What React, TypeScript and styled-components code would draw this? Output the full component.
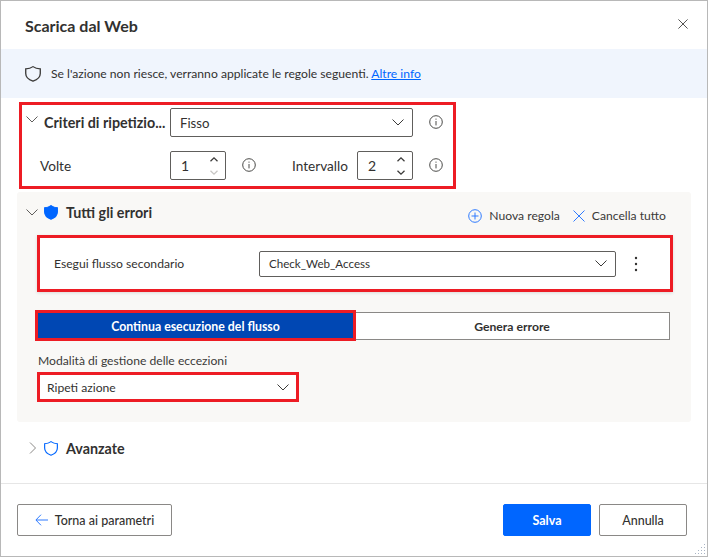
import React from "react";
import styled, { createGlobalStyle } from "styled-components";

const RED = "#ed1c24";
const BLUE = "#0066ff";
const TEXT = "#323130";
const FIELD_BORDER = "#605e5c";

const GlobalStyle = createGlobalStyle`
  html, body {
    margin: 0;
    padding: 0;
    background: #fff;
  }
  * {
    box-sizing: border-box;
  }
`;

const Window = styled.div`
  position: relative;
  width: 708px;
  height: 557px;
  display: flex;
  flex-direction: column;
  background: #fff;
  border: 1px solid #b8b8b8;
  font-family: "Lato", "Noto Sans", sans-serif;
  font-size: 12.15px;
  color: ${TEXT};
`;

const Header = styled.header`
  height: 48px;
  flex: none;
  display: flex;
  align-items: center;
  justify-content: space-between;
  padding: 0 19px 0 24px;
`;

const Title = styled.h1`
  margin: 0;
  font-size: 16px;
  font-weight: 700;
  color: ${TEXT};
`;

const CloseButton = styled.span`
  display: flex;
  color: #323130;
  margin-bottom: 2px;
`;

const Banner = styled.div`
  height: 49px;
  flex: none;
  display: flex;
  align-items: center;
  gap: 10px;
  padding-left: 24px;
  background: #f0f5fd;
`;

const BannerLink = styled.a`
  color: #0066ff;
  text-decoration: underline;
`;

const RetryBox = styled.section`
  width: 437px;
  height: 87px;
  margin: 4px 0 0 18px;
  padding: 3px 0 0;
  border: 3px solid ${RED};
  display: flex;
  flex-direction: column;
  gap: 14px;
`;

const Row = styled.div<{ $indent?: number }>`
  display: flex;
  align-items: center;
  height: 29px;
  font-size: 13.6px;
  padding-left: ${({ $indent }) => $indent ?? 0}px;
`;

const RetryLabel = styled.div`
  width: 148px;
  flex: none;
  display: flex;
  align-items: center;
  padding-left: 4px;
  gap: 6px;
  font-size: 14.3px;
  font-weight: 700;
  white-space: nowrap;
`;

const RetryChevron = styled.span`
  display: flex;
  margin-top: -6px;
`;

const PlainLabel = styled.div<{ $width: number; $left?: number }>`
  width: ${({ $width }) => $width}px;
  margin-left: ${({ $left }) => $left ?? 0}px;
  flex: none;
  white-space: nowrap;
`;

const Select = styled.div<{ $width: number; $height: number; $flat?: boolean; $size?: number }>`
  width: ${({ $width }) => $width}px;
  height: ${({ $height }) => $height}px;
  flex: none;
  display: flex;
  align-items: center;
  justify-content: space-between;
  padding: 0 8px 0 ${({ $flat }) => ($flat ? 7 : 9)}px;
  padding-right: ${({ $flat }) => ($flat ? 7 : 8)}px;
  background: #fff;
  border: ${({ $flat }) => ($flat ? "none" : `1px solid ${FIELD_BORDER}`)};
  border-radius: 2px;
  font-size: ${({ $size }) => $size ?? 12.15}px;
  white-space: nowrap;
`;

const Spin = styled.div`
  width: 56px;
  height: 29px;
  flex: none;
  display: flex;
  align-items: center;
  justify-content: space-between;
  padding: 0 7px 0 10px;
  background: #fff;
  border: 1px solid ${FIELD_BORDER};
  border-radius: 2px;
  font-size: 14px;
`;

const SpinArrows = styled.div`
  display: flex;
  flex-direction: column;
  gap: 8px;
`;

const SpinArrow = styled.span<{ $off?: boolean }>`
  display: flex;
  color: ${({ $off }) => ($off ? "#c8c6c4" : "#3b3a39")};
`;

const InfoIcon = styled.span<{ $left: number }>`
  display: flex;
  margin-top: -2px;
  margin-left: ${({ $left }) => $left}px;
  color: #4a4a48;
`;

const Panel = styled.section`
  width: 674px;
  height: 230px;
  margin: 3px 0 0 16px;
  padding-top: 11px;
  background: #f9f8f6;
  border-radius: 3px;
`;

const RuleHeader = styled.div`
  height: 22px;
  display: flex;
  align-items: center;
  padding: 0 25px 0 9px;
`;

const RuleTitle = styled.div`
  display: flex;
  align-items: center;
  padding-bottom: 3px;
  font-size: 14.3px;
  font-weight: 700;
  flex: 1;
`;

const Chevron = styled.span`
  display: flex;
  width: 18px;
  color: #605e5c;
`;

const ShieldWrap = styled.span`
  display: flex;
  width: 22px;
`;

const RuleAction = styled.span<{ $left: number }>`
  display: flex;
  align-items: center;
  gap: 7px;
  margin-left: ${({ $left }) => $left}px;
  padding-top: 3px;
  color: #3b3a39;
`;

const ActionIcon = styled.span`
  display: flex;
  color: #2f7bff;
`;

const RuleCard = styled.div`
  width: 636px;
  height: 57px;
  margin: 10px 0 0 20px;
  padding-left: 14px;
  display: flex;
  align-items: center;
  background: #fff;
  border: 3px solid ${RED};
  box-shadow: 0 1px 3px rgba(0, 0, 0, 0.12);
`;

const KebabButton = styled.span`
  display: flex;
  margin-left: 18px;
  color: #323130;
`;

const Toggle = styled.div`
  display: flex;
  align-items: center;
  margin: 18px 0 0 18px;
`;

const ToggleOn = styled.button`
  position: relative;
  z-index: 1;
  width: 321px;
  height: 31px;
  padding: 1px 0 0;
  border: 3px solid ${RED};
  background: #0047b3;
  color: #fff;
  font: inherit;
  font-size: 12.3px;
  font-weight: 700;
`;

const ToggleOff = styled.button`
  width: 316px;
  height: 28px;
  margin-left: -2px;
  padding: 1px 0 0;
  border: 1px solid #8a8886;
  background: #fff;
  color: ${TEXT};
  font: inherit;
  font-size: 12.2px;
  font-weight: 700;
`;

const FieldLabel = styled.div`
  height: 18px;
  margin: 11px 0 0 21px;
  line-height: 18px;
  color: #3b3a39;
`;

const ModeBox = styled.div`
  width: 262px;
  height: 30px;
  margin: 2px 0 0 20px;
  border: 3px solid ${RED};
`;

const AdvancedRow = styled.div`
  height: 22px;
  flex: none;
  margin: 15px 0 0 25px;
  display: flex;
  align-items: center;
  font-size: 14.3px;
  font-weight: 700;
`;

const Footer = styled.footer`
  margin-top: auto;
  height: 73px;
  flex: none;
  display: flex;
  align-items: flex-start;
  gap: 8px;
  padding: 20px 20px 0 16px;
  border-top: 1px solid #e6e6e6;
`;

const FooterButton = styled.button<{ $primary?: boolean; $width: number }>`
  width: ${({ $width }) => $width}px;
  height: 32px;
  display: flex;
  align-items: center;
  justify-content: center;
  gap: 7px;
  padding: 0;
  border: 1px solid ${({ $primary }) => ($primary ? BLUE : "#8a8886")};
  border-radius: 2px;
  background: ${({ $primary }) => ($primary ? BLUE : "#fff")};
  color: ${({ $primary }) => ($primary ? "#fff" : TEXT)};
  font: inherit;
  font-size: 12.5px;
  font-weight: ${({ $primary }) => ($primary ? 700 : 500)};
`;

const FooterSpacer = styled.div`
  flex: 1;
`;

const Grip = styled.svg`
  position: absolute;
  right: 1px;
  bottom: 1px;
`;

const ShieldIcon: React.FC<{ filled?: boolean; color?: string; width?: number; height?: number }> = ({
  filled,
  color = BLUE,
  width = 14,
  height = 15,
}) => (
  <svg
    width={width}
    height={height}
    viewBox="1.4 0.6 13.2 14.9"
    preserveAspectRatio="none"
    fill={filled ? color : "none"}
    stroke={color}
    strokeWidth="1.1"
  >
    <path d="M8 1.2c1.6 1.3 3.6 2 6 2.1v4.2c0 3.2-2 5.6-6 7.2-4-1.6-6-4-6-7.2V3.3c2.4-.1 4.4-.8 6-2.1z" />
  </svg>
);

// thin Fluent-like caret, 12 wide and 7 high
const Caret: React.FC<{ color?: string }> = ({ color = "#3b3a39" }) => (
  <svg width="12" height="7" viewBox="0 0 12 7" fill="none" stroke={color} strokeWidth="1">
    <path d="M0.5 0.5L6 6L11.5 0.5" />
  </svg>
);

const CaretRight: React.FC = () => (
  <svg width="8" height="12" viewBox="0 0 8 12" fill="none" stroke="#8a8886" strokeWidth="1" style={{ marginLeft: 3 }}>
    <path d="M1 0.5L6.5 6L1 11.5" />
  </svg>
);

const SpinUp: React.FC = () => (
  <svg width="8" height="5" viewBox="0 0 8 5" fill="none" stroke="currentColor" strokeWidth="1.3">
    <path d="M0.5 4.2L4 0.9L7.5 4.2" />
  </svg>
);

const SpinDown: React.FC = () => (
  <svg width="8" height="5" viewBox="0 0 8 5" fill="none" stroke="currentColor" strokeWidth="1.3">
    <path d="M0.5 0.8L4 4.1L7.5 0.8" />
  </svg>
);

const InfoGlyph: React.FC = () => (
  <svg width="14" height="14" viewBox="0 0 14 14" fill="none" stroke="currentColor" strokeWidth="1">
    <circle cx="7" cy="7" r="6.3" />
    <path d="M7 6v4.4M7 3.6v1.1" />
  </svg>
);

const Cross: React.FC<{ size: number }> = ({ size }) => (
  <svg width={size} height={size} viewBox="0 0 12 12" fill="none" stroke="currentColor" strokeWidth="1">
    <path d="M0.5 0.5L11.5 11.5M11.5 0.5L0.5 11.5" />
  </svg>
);

const PlusCircle: React.FC = () => (
  <svg width="14" height="14" viewBox="0 0 14 14" fill="none" stroke="currentColor" strokeWidth="1">
    <circle cx="7" cy="7" r="6.3" />
    <path d="M7 3.5v7M3.5 7h7" />
  </svg>
);

const BackArrow: React.FC = () => (
  <svg width="13" height="12" viewBox="0 0 13 12" fill="none" stroke="#2f7bff" strokeWidth="1">
    <path d="M6 0.7L0.9 6L6 11.3M1 6H13" />
  </svg>
);

const Kebab: React.FC = () => (
  <svg width="4" height="16" viewBox="0 0 4 16" fill="currentColor">
    <circle cx="2" cy="2" r="1.2" />
    <circle cx="2" cy="8" r="1.2" />
    <circle cx="2" cy="14" r="1.2" />
  </svg>
);

const GRIP_DOTS = [
  [10, 1],
  [7, 4],
  [10, 4],
  [4, 7],
  [7, 7],
  [10, 7],
  [1, 10],
  [4, 10],
  [7, 10],
  [10, 10],
];

const App: React.FC = () => {
  return (
    <Window>
      <GlobalStyle />
      <Header>
        <Title>Scarica dal Web</Title>
        <CloseButton>
          <Cross size={10} />
        </CloseButton>
      </Header>

      <Banner>
        <ShieldIcon color="#3b3a39" width={16} height={16} />
        <span>
          Se l'azione non riesce, verranno applicate le regole seguenti. <BannerLink>Altre info</BannerLink>
        </span>
      </Banner>

      <RetryBox>
        <Row>
          <RetryLabel>
            <RetryChevron>
              <Caret color="#605e5c" />
            </RetryChevron>
            Criteri di ripetizio...
          </RetryLabel>
          <Select $width={243} $height={29} $size={13.2}>
            Fisso
            <Caret />
          </Select>
          <InfoIcon $left={16}>
            <InfoGlyph />
          </InfoIcon>
        </Row>
        <Row $indent={18}>
          <PlainLabel $width={130}>Volte</PlainLabel>
          <Spin>
            1
            <SpinArrows>
              <SpinArrow>
                <SpinUp />
              </SpinArrow>
              <SpinArrow $off>
                <SpinDown />
              </SpinArrow>
            </SpinArrows>
          </Spin>
          <InfoIcon $left={16}>
            <InfoGlyph />
          </InfoIcon>
          <PlainLabel $width={65} $left={36}>
            Intervallo
          </PlainLabel>
          <Spin>
            2
            <SpinArrows>
              <SpinArrow>
                <SpinUp />
              </SpinArrow>
              <SpinArrow>
                <SpinDown />
              </SpinArrow>
            </SpinArrows>
          </Spin>
          <InfoIcon $left={16}>
            <InfoGlyph />
          </InfoIcon>
        </Row>
      </RetryBox>

      <Panel>
        <RuleHeader>
          <RuleTitle>
            <Chevron>
              <Caret color="#605e5c" />
            </Chevron>
            <ShieldWrap>
              <ShieldIcon filled />
            </ShieldWrap>
            Tutti gli errori
          </RuleTitle>
          <RuleAction $left={0}>
            <ActionIcon>
              <PlusCircle />
            </ActionIcon>
            Nuova regola
          </RuleAction>
          <RuleAction $left={13}>
            <ActionIcon>
              <Cross size={12} />
            </ActionIcon>
            Cancella tutto
          </RuleAction>
        </RuleHeader>

        <RuleCard>
          <PlainLabel $width={205}>Esegui flusso secondario</PlainLabel>
          <Select $width={357} $height={26} $size={11.6}>
            Check_Web_Access
            <Caret />
          </Select>
          <KebabButton>
            <Kebab />
          </KebabButton>
        </RuleCard>

        <Toggle>
          <ToggleOn>Continua esecuzione del flusso</ToggleOn>
          <ToggleOff>Genera errore</ToggleOff>
        </Toggle>

        <FieldLabel>Modalità di gestione delle eccezioni</FieldLabel>
        <ModeBox>
          <Select $width={256} $height={24} $flat>
            Ripeti azione
            <Caret />
          </Select>
        </ModeBox>
      </Panel>

      <AdvancedRow>
        <Chevron>
          <CaretRight />
        </Chevron>
        <ShieldWrap>
          <ShieldIcon />
        </ShieldWrap>
        Avanzate
      </AdvancedRow>

      <Footer>
        <FooterButton $width={155}>
          <BackArrow />
          Torna ai parametri
        </FooterButton>
        <FooterSpacer />
        <FooterButton $primary $width={88}>
          Salva
        </FooterButton>
        <FooterButton $width={88}>Annulla</FooterButton>
      </Footer>

      <Grip width="12" height="12" viewBox="0 0 12 12" fill="#a9b4c4">
        {GRIP_DOTS.map(([x, y]) => (
          <rect key={`${x}-${y}`} x={x} y={y} width="1" height="1" />
        ))}
      </Grip>
    </Window>
  );
};

export default App;
